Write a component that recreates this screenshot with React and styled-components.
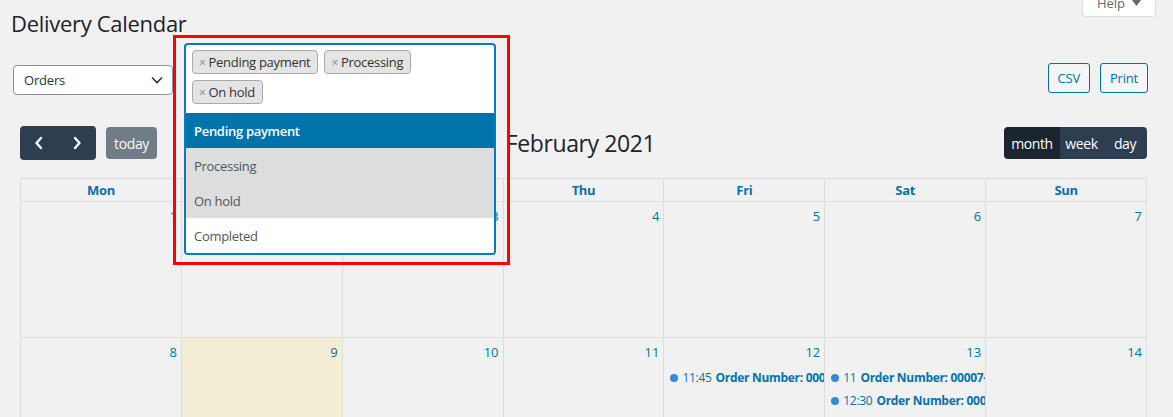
import React from 'react';
import styled, { createGlobalStyle } from 'styled-components';

const GlobalStyle = createGlobalStyle`
  html, body {
    margin: 0;
    padding: 0;
    background: #f1f1f1;
    font-family: "Open Sans", "Noto Sans", sans-serif;
    color: #1d2327;
    overflow: hidden;
  }
`;

const Page = styled.div`
  position: relative;
  width: 1173px;
  height: 417px;
  padding: 0 25px 0 11px;
  box-sizing: border-box;
  overflow: hidden;
`;

const TopRow = styled.div`
  display: flex;
  justify-content: space-between;
  align-items: flex-start;
`;

const Title = styled.h1`
  margin: 9px 0 0;
  font-size: 22px;
  font-weight: 400;
  line-height: 29px;
  letter-spacing: -0.3px;
  color: #1d2327;
`;

const HelpTab = styled.div`
  display: flex;
  align-items: flex-end;
  height: 17px;
  width: 74px;
  margin-right: -8px;
  box-sizing: border-box;
  overflow: hidden;
  background: #fff;
  border: 1px solid #dcdcde;
  border-top: none;
  border-radius: 0 0 4px 4px;
  justify-content: center;
  color: #646970;
  font-size: 13px;
`;

const HelpLabel = styled.span`
  line-height: 26px;
  display: flex;
  gap: 7px;
  align-items: center;
`;

const Controls = styled.div`
  display: flex;
  justify-content: space-between;
  align-items: flex-start;
  margin-top: 25px;
`;

const SelectBox = styled.div`
  display: flex;
  align-items: center;
  justify-content: space-between;
  width: 160px;
  height: 30px;
  margin: 2px 0 0 2px;
  padding: 0 8px 0 10px;
  box-sizing: border-box;
  background: #fff;
  border: 1px solid #8c8f94;
  border-radius: 4px;
  font-size: 13px;
  letter-spacing: -0.2px;
  color: #2c3338;
`;

const ButtonRow = styled.div`
  display: flex;
  gap: 10px;
`;

const OutlineButton = styled.button`
  height: 30px;
  padding: 0 9px;
  background: #f3f5f6;
  border: 1px solid #0071a1;
  border-radius: 3px;
  color: #0071a1;
  font-family: inherit;
  font-size: 13px;
  letter-spacing: -0.2px;
`;

const Calendar = styled.div`
  margin: 31px 0 0 9px;
  width: 1127px;
`;

const Toolbar = styled.div`
  display: flex;
  justify-content: space-between;
  align-items: center;
  height: 34px;
  margin-bottom: 18px;
`;

const ToolGroup = styled.div`
  display: flex;
  align-items: center;
  gap: 10px;
`;

const ButtonGroup = styled.div`
  display: flex;
  border-radius: 4px;
  overflow: hidden;
`;

const CalButton = styled.button`
  display: flex;
  align-items: center;
  justify-content: center;
  width: ${p => p.$w}px;
  height: ${p => p.$tall ? 34 : 32}px;
  padding: 0;
  border: none;
  background: ${p => p.$active ? '#1a252f' : '#2c3e50'};
  color: #fff;
  font-family: inherit;
  font-size: 14px;
  letter-spacing: -0.4px;
  opacity: ${p => p.$disabled ? 0.65 : 1};
  border-radius: ${p => p.$single ? '4px' : '0'};
`;

const MonthTitle = styled.h2`
  margin: 0;
  font-size: 23px;
  font-weight: 400;
  letter-spacing: -0.4px;
  color: #1d2327;
`;

const Grid = styled.div`
  display: grid;
  grid-template-columns: repeat(7, 1fr);
  border-top: 1px solid #ddd;
  border-left: 1px solid #ddd;
`;

const HeadCell = styled.div`
  height: 22px;
  line-height: 22px;
  text-align: center;
  font-size: 13px;
  font-weight: 700;
  color: #0073aa;
  letter-spacing: -0.3px;
  border-right: 1px solid #ddd;
  border-bottom: 1px solid #ddd;
`;

const DayCell = styled.div`
  height: 136px;
  padding: 4px 0 0;
  box-sizing: border-box;
  overflow: hidden;
  background: ${p => p.$today ? '#f3eed3' : 'transparent'};
  border-right: 1px solid #ddd;
  border-bottom: 1px solid #ddd;
`;

const DayNumber = styled.div`
  text-align: right;
  padding: 0 4px;
  font-size: 13px;
  line-height: 20px;
  color: #0073aa;
`;

const EventList = styled.div`
  margin-top: 6px;
  display: flex;
  flex-direction: column;
  gap: 4px;
`;

const EventRow = styled.div`
  display: flex;
  align-items: center;
  gap: 4px;
  padding: 0 0 0 6px;
  height: 19px;
  white-space: nowrap;
  font-size: 12px;
  letter-spacing: -0.3px;
  color: #0073aa;
`;

const EventDot = styled.span`
  flex: none;
  width: 8px;
  height: 8px;
  border-radius: 50%;
  background: #3788d8;
`;

const EventTitle = styled.b`
  font-weight: 700;
`;

const Highlight = styled.div`
  position: absolute;
  left: 173px;
  top: 35px;
  width: 337px;
  height: 230px;
  box-sizing: border-box;
  border: 3px solid #ff0000;
  padding: 5px 11px 0 8px;
`;

const Dropdown = styled.div`
  width: 312px;
  box-sizing: border-box;
  background: #fff;
  border: 2px solid #0a7ab8;
  border-radius: 4px;
  overflow: hidden;
`;

const TagArea = styled.div`
  display: flex;
  flex-wrap: wrap;
  gap: 6px;
  width: 230px;
  padding: 5px 6px 9px;
`;

const Tag = styled.span`
  display: flex;
  align-items: center;
  gap: 3px;
  height: 24px;
  padding: 0 7px 0 6px;
  box-sizing: border-box;
  background: #e4e4e4;
  border: 1px solid #aaa;
  border-radius: 4px;
  font-size: 13px;
  letter-spacing: -0.3px;
  color: #333;
`;

const TagX = styled.span`
  color: #888;
  font-size: 12px;
`;

const Option = styled.div`
  height: 35px;
  line-height: 37px;
  padding: 0 8px;
  font-size: 13px;
  letter-spacing: -0.3px;
  background: ${p => p.$hl ? '#0073aa' : p.$sel ? '#dddddd' : '#fff'};
  color: ${p => p.$hl ? '#fff' : '#50575e'};
  font-weight: ${p => p.$hl ? 600 : 400};
`;

const Chevron = ({ dir }) => (
  <svg width="10" height="14" viewBox="0 0 10 14">
    <path
      d={dir === 'left' ? 'M7 2 L2.5 7 L7 12' : 'M3 2 L7.5 7 L3 12'}
      fill="none"
      stroke="#fff"
      strokeWidth="2.4"
      strokeLinecap="round"
      strokeLinejoin="round"
    />
  </svg>
);

const days = ['Mon', 'Tue', 'Wed', 'Thu', 'Fri', 'Sat', 'Sun'];

const events = {
  12: [{ time: '11:45', title: 'Order Number: 00003-Processing' }],
  13: [
    { time: '11', title: 'Order Number: 00007-Pending' },
    { time: '12:30', title: 'Order Number: 00009-On hold' },
  ],
};

export default function App() {
  const dates = [];
  for (let d = 1; d <= 14; d++) dates.push(d);

  return (
    <Page>
      <GlobalStyle />
      <TopRow>
        <Title>Delivery Calendar</Title>
        <HelpTab>
          <HelpLabel>
            Help
            <svg width="9" height="6" viewBox="0 0 9 6">
              <path d="M0 0 H9 L4.5 6 Z" fill="#646970" />
            </svg>
          </HelpLabel>
        </HelpTab>
      </TopRow>

      <Controls>
        <SelectBox>
          Orders
          <svg width="14" height="14" viewBox="0 0 14 14">
            <path d="M2 4.5 L7 9.5 L12 4.5" fill="none" stroke="#2c3338" strokeWidth="1.6" />
          </svg>
        </SelectBox>
        <ButtonRow>
          <OutlineButton>CSV</OutlineButton>
          <OutlineButton>Print</OutlineButton>
        </ButtonRow>
      </Controls>

      <Calendar>
        <Toolbar>
          <ToolGroup>
            <ButtonGroup>
              <CalButton $tall $w={38}><Chevron dir="left" /></CalButton>
              <CalButton $tall $w={38}><Chevron dir="right" /></CalButton>
            </ButtonGroup>
            <CalButton $single $disabled $w={51}>today</CalButton>
          </ToolGroup>
          <MonthTitle>February 2021</MonthTitle>
          <ButtonGroup>
            <CalButton $active $w={56}>month</CalButton>
            <CalButton $w={43}>week</CalButton>
            <CalButton $w={44}>day</CalButton>
          </ButtonGroup>
        </Toolbar>

        <Grid>
          {days.map(d => <HeadCell key={d}>{d}</HeadCell>)}
          {dates.map(d => (
            <DayCell key={d} $today={d === 9}>
              <DayNumber>{d}</DayNumber>
              {events[d] && (
                <EventList>
                  {events[d].map(ev => (
                    <EventRow key={ev.title}>
                      <EventDot />
                      <span>{ev.time}</span>
                      <EventTitle>{ev.title}</EventTitle>
                    </EventRow>
                  ))}
                </EventList>
              )}
            </DayCell>
          ))}
        </Grid>
      </Calendar>

      <Highlight>
        <Dropdown>
          <TagArea>
            <Tag><TagX>×</TagX>Pending payment</Tag>
            <Tag><TagX>×</TagX>Processing</Tag>
            <Tag><TagX>×</TagX>On hold</Tag>
          </TagArea>
          <Option $hl>Pending payment</Option>
          <Option $sel>Processing</Option>
          <Option $sel>On hold</Option>
          <Option>Completed</Option>
        </Dropdown>
      </Highlight>
    </Page>
  );
}
